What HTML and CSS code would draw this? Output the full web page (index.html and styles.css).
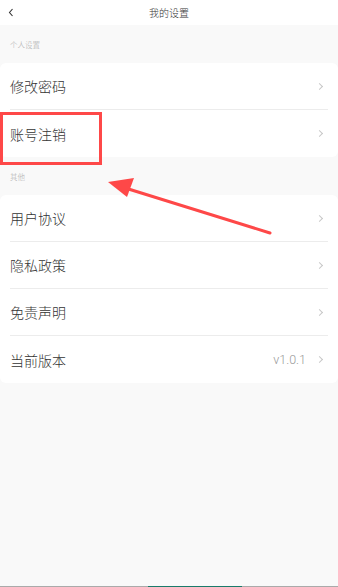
FILE: index.html
```html
<!DOCTYPE html>
<html lang="zh-CN">
<head>
  <meta charset="UTF-8" />
  <meta name="viewport" content="width=device-width, initial-scale=1.0"/>
  <title>我的设置</title>
  <link rel="stylesheet" href="styles.css">
</head>
<body>

  <div class="header">
    <span class="back">
      <svg width="6" height="9" viewBox="0 0 6 9"><path d="M4.5 1 L1.5 4.5 L4.5 8" fill="none" stroke="#333" stroke-width="1.1"/></svg>
    </span>
    <h1>我的设置</h1>
  </div>

  <div class="section-title">个人设置</div>
  <div class="card">
    <div class="row"><span>修改密码</span><i class="arrow"></i></div>
    <div class="row"><span>账号注销</span><i class="arrow"></i></div>
  </div>

  <div class="section-title">其他</div>
  <div class="card">
    <div class="row"><span>用户协议</span><i class="arrow"></i></div>
    <div class="row"><span>隐私政策</span><i class="arrow"></i></div>
    <div class="row"><span>免责声明</span><i class="arrow"></i></div>
    <div class="row"><span>当前版本</span><em class="value">v1.0.1</em><i class="arrow"></i></div>
  </div>

  <!-- annotation -->
  <div class="mark-box"></div>
  <svg class="mark-arrow" width="338" height="587" viewBox="0 0 338 587">
    <line x1="270" y1="233" x2="122" y2="187" stroke="#fe4848" stroke-width="3" stroke-linecap="round"/>
    <polygon points="108,182 134,178 127,197" fill="#fe4848"/>
  </svg>

  <div class="bottom-bar"><span></span></div>

</body>
</html>
```

FILE: styles.css
```css
* {
  box-sizing: border-box;
  margin: 0;
  padding: 0;
}

body {
  background: #f9f9f9;
  font-family: "Noto Sans CJK SC", "Noto Sans", sans-serif;
  color: #333;
  height: 587px;
  overflow: hidden;
  position: relative;
}

.header {
  height: 25px;
  background: #fff;
  display: flex;
  align-items: center;
  justify-content: center;
  position: relative;
}

.header h1 {
  font-size: 10px;
  font-weight: 300;
  color: #333;
}

.back {
  position: absolute;
  left: 8px;
  top: 8px;
  display: flex;
}

.section-title {
  height: 38px;
  display: flex;
  align-items: center;
  padding-left: 10px;
  font-size: 7.5px;
  font-weight: 300;
  color: #aaa;
}

.card {
  background: #fff;
  border-radius: 6px;
}

.row {
  height: 47px;
  margin: 0 10px 0 10px;
  display: flex;
  align-items: center;
  font-size: 14px;
  font-weight: 300;
  color: #333;
  border-bottom: 1px solid #ececec;
}

.row:last-child {
  border-bottom: none;
}

.row span {
  flex: 1;
}

.value {
  font-style: normal;
  font-family: "Roboto", "Liberation Sans", sans-serif;
  font-size: 12.5px;
  font-weight: 300;
  color: #999;
  margin-right: 11px;
}

.arrow {
  width: 5px;
  height: 5px;
  border-top: 1px solid #c8c8c8;
  border-right: 1px solid #c8c8c8;
  transform: rotate(45deg);
  margin-right: 6px;
}

.mark-box {
  position: absolute;
  left: 0;
  top: 112px;
  width: 102px;
  height: 53px;
  border: 3px solid #fe4848;
}

.mark-arrow {
  position: absolute;
  left: 0;
  top: 0;
}

.bottom-bar {
  position: absolute;
  left: 0;
  right: 0;
  bottom: 0;
  height: 1px;
  background: #aaa;
}

.bottom-bar span {
  display: block;
  margin-left: 148px;
  width: 94px;
  height: 1px;
  background: #1a7a6a;
}
```
